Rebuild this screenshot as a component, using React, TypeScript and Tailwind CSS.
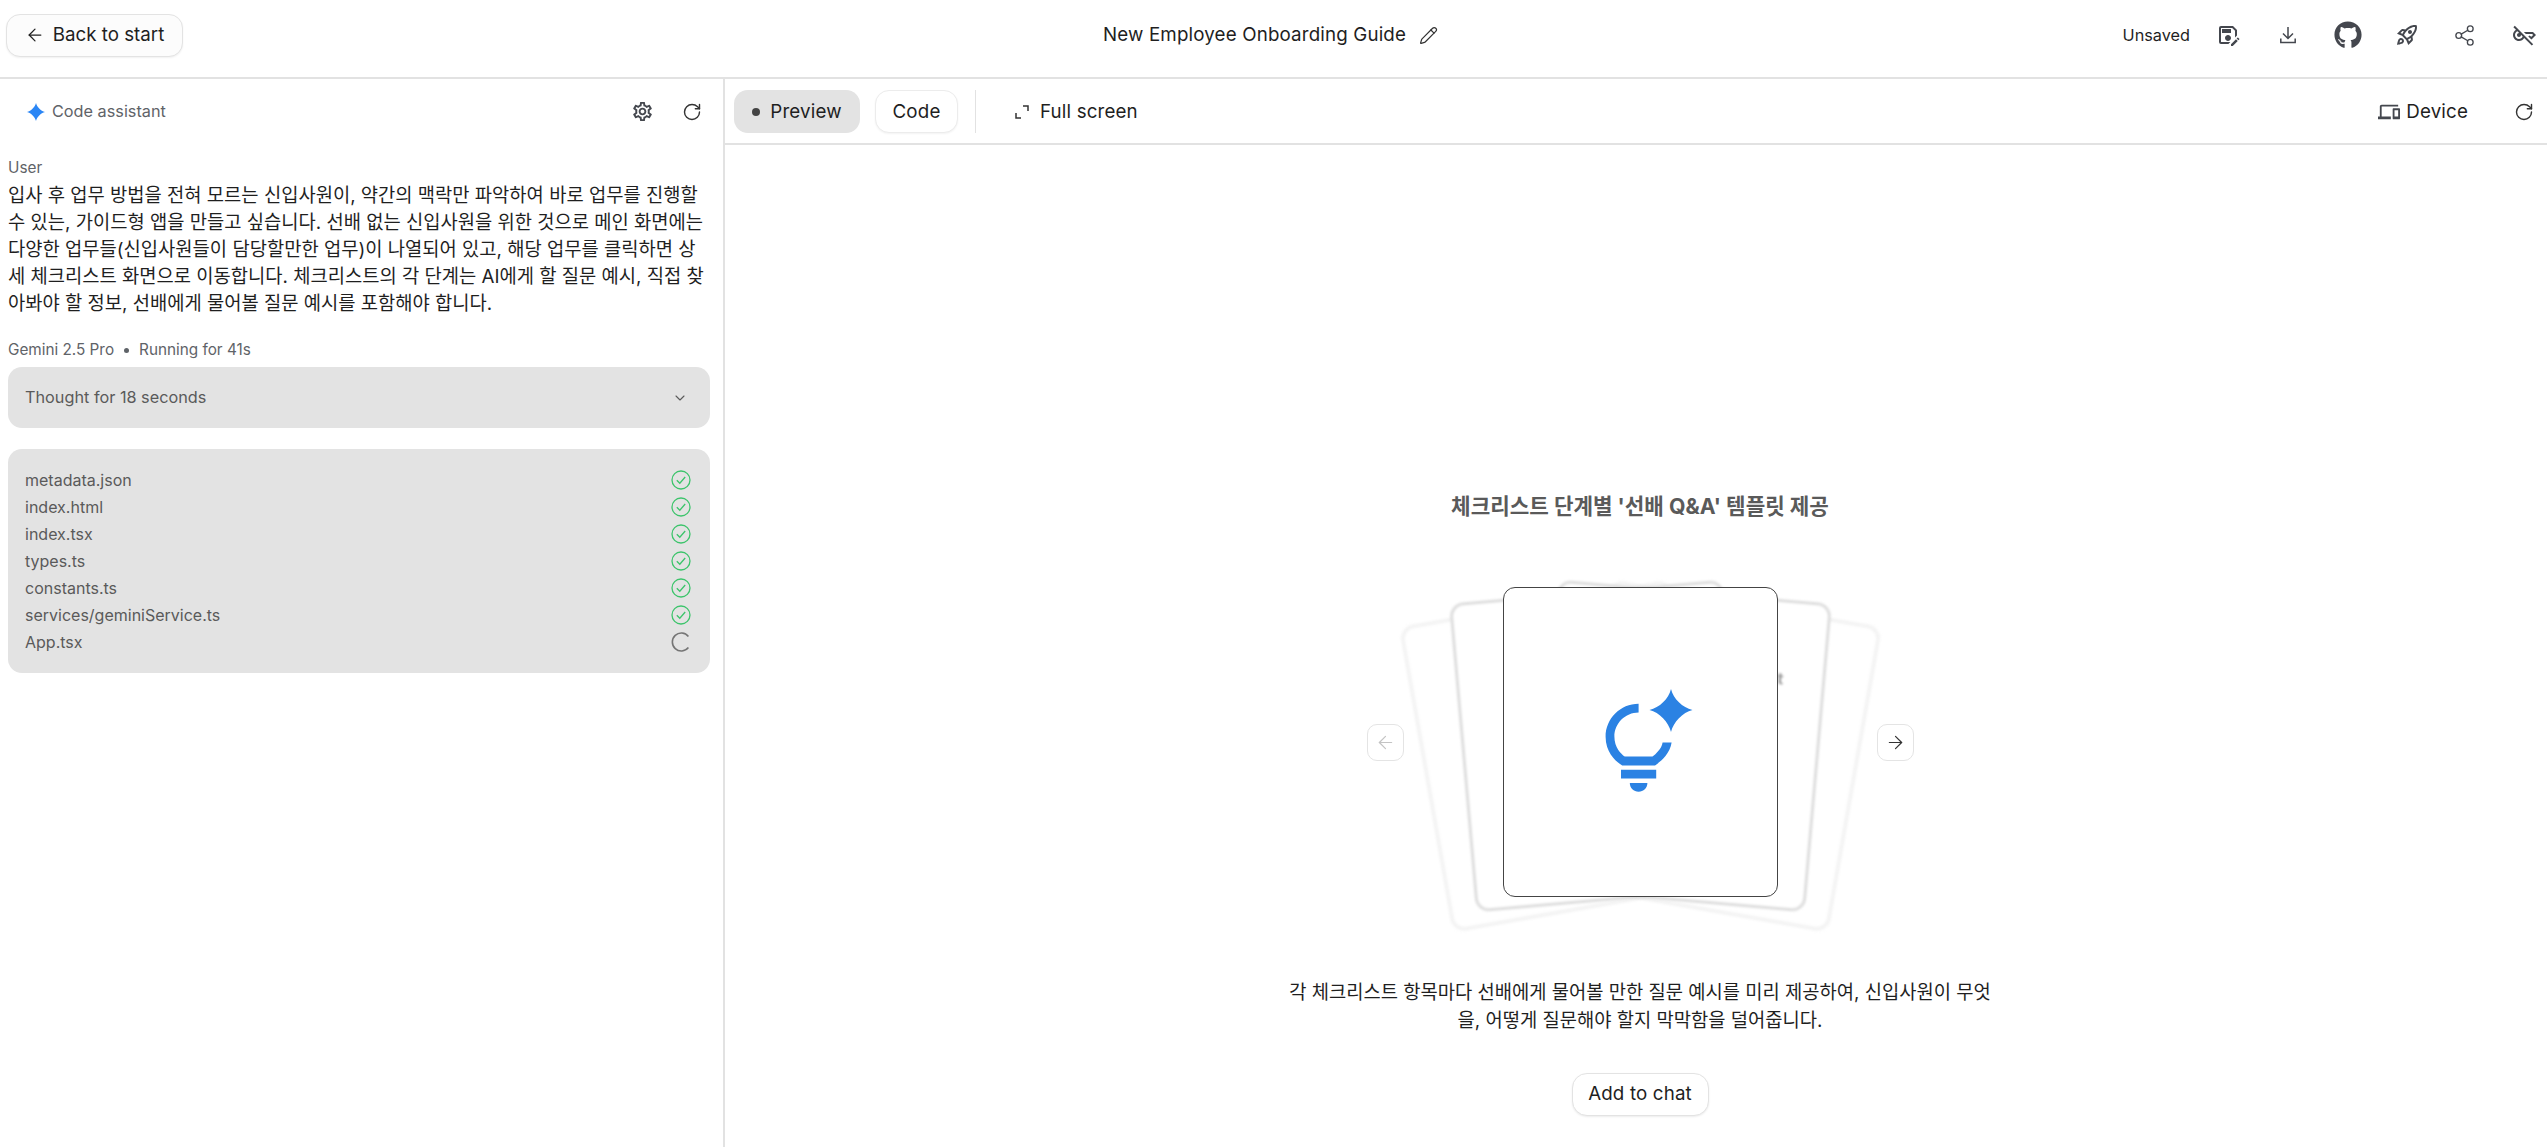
import { ArrowLeft, ChevronDown, Pencil, RotateCw, Share2 } from 'lucide-react'
import { FaGithub } from 'react-icons/fa'
import {
  MdOutlineDevices,
  MdOutlineKeyOff,
  MdOutlineRocketLaunch,
  MdOutlineSaveAs,
  MdOutlineSettings,
} from 'react-icons/md'

const files = ['metadata.json', 'index.html', 'index.tsx', 'types.ts', 'constants.ts', 'services/geminiService.ts']

function Sparkle({ className }: { className: string }) {
  return (
    <svg viewBox="0 0 44 44" className={className} fill="currentColor">
      <path d="M22 0C24.5 10 33.5 19 44 22 33.5 25 24.5 34 22 44 19.5 34 10.5 25 0 22 10.5 19 19.5 10 22 0z" />
    </svg>
  )
}

function CheckRing() {
  return (
    <svg viewBox="0 0 20 20" className="h-5 w-5 text-[#3cc46b]" fill="none" stroke="currentColor" strokeWidth="1.3">
      <circle cx="10" cy="10" r="9" />
      <path d="M5.8 10.2l3 3 5.4-6.2" />
    </svg>
  )
}

function Spinner() {
  return (
    <svg viewBox="0 0 20 20" className="h-5 w-5 text-[#757575]" fill="none" stroke="currentColor" strokeWidth="1.6">
      <path d="M17.4 4.4A9 9 0 1 0 17.4 15.6" />
    </svg>
  )
}

function FullScreenIcon() {
  return (
    <svg viewBox="0 0 14 14" className="h-[14px] w-[14px] text-[#333]" fill="none" stroke="currentColor" strokeWidth="1.5">
      <path d="M1 8v5h5M8 1h5v5" />
    </svg>
  )
}

function DownloadIcon() {
  return (
    <svg viewBox="0 0 24 24" className="h-6 w-6" fill="none" stroke="currentColor" strokeWidth="1.5">
      <path d="M12 4v11.5M7 10.5l5 5 5-5M4.8 15.5v4h14.4v-4" />
    </svg>
  )
}

function BackCard({ className, children }: { className: string; children?: React.ReactNode }) {
  return (
    <div className={`absolute h-[310px] w-[275px] rounded-[14px] bg-white ${className}`}>
      {children}
    </div>
  )
}

export default function App() {
  return (
    <div className="flex h-[1147px] w-full flex-col overflow-hidden bg-white font-['Inter','Noto_Sans_CJK_KR',sans-serif] text-[#1f1f1f]">
      <header className="relative flex h-[79px] shrink-0 items-center justify-between border-b-2 border-[#e2e2e2] pb-[7px] pl-[6px] pr-[11px]">
        <button className="flex h-[43px] w-[177px] items-center justify-center gap-[8px] rounded-[14px] border border-[#e3e3e3] bg-[#fcfcfc] text-[18.75px] shadow-[0_1px_2px_rgba(0,0,0,0.06)]">
          <ArrowLeft size={20} strokeWidth={1.5} />
          Back to start
        </button>
        <div className="absolute left-[1103px] top-[20px] flex items-center gap-[13px] text-[18.75px] leading-[30px] tracking-[0.15px]">
          New Employee Onboarding Guide
          <Pencil size={19} strokeWidth={1.5} className="text-[#333]" />
        </div>
        <div className="flex items-center text-[#44474e]">
          <span className="mr-[26px] text-[16.25px] text-[#1f1f1f]">Unsaved</span>
          <MdOutlineSaveAs size={24} className="mr-[36px]" />
          <DownloadIcon />
          <FaGithub size={28} className="ml-[34px] mr-[33px]" />
          <MdOutlineRocketLaunch size={24} className="mr-[34px]" />
          <Share2 size={23} strokeWidth={1.4} className="mr-[36px]" />
          <MdOutlineKeyOff size={24} />
        </div>
      </header>

      <div className="flex min-h-0 flex-1">
        <aside className="w-[725px] shrink-0 border-r-2 border-[#e2e2e2] pl-[8px] pr-[13px]">
          <div className="flex h-[65px] items-center justify-between pl-[19px] pr-[8px] text-[#44474e]">
            <div className="flex items-center gap-[7px] text-[16.25px] text-[#5f6368]">
              <Sparkle className="h-[18px] w-[18px] text-[#2b86f5]" />
              Code assistant
            </div>
            <div className="flex items-center gap-[28px]">
              <MdOutlineSettings size={23} />
              <RotateCw size={20} strokeWidth={1.7} className="text-[#333]" />
            </div>
          </div>

          <p className="mt-[13px] text-[15.3px] leading-[22px] text-[#5f6368]">User</p>
          <p className="mt-[3px] text-[18.75px] leading-[27px] text-[#1f1f1f]">
            입사 후 업무 방법을 전혀 모르는 신입사원이, 약간의 맥락만 파악하여 바로 업무를 진행할 수 있는, 가이드형 앱을 만들고 싶습니다. 선배 없는 신입사원을 위한 것으로 메인 화면에는 다양한 업무들(신입사원들이 담당할만한 업무)이 나열되어 있고, 해당 업무를 클릭하면 상세 체크리스트 화면으로 이동합니다. 체크리스트의 각 단계는 AI에게 할 질문 예시, 직접 찾아봐야 할 정보, 선배에게 물어볼 질문 예시를 포함해야 합니다.
          </p>

          <div className="mt-[22px] flex items-center text-[15.3px] leading-[22px] text-[#5f6368]">
            Gemini 2.5 Pro
            <span className="mx-[10px] h-[5px] w-[5px] rounded-full bg-[#5f6368]" />
            Running for 41s
          </div>
          <div className="mt-[6px] flex h-[61px] items-center justify-between rounded-[14px] bg-[#e3e3e3] pl-[17px] pr-[22px] text-[16.25px] text-[#5a5a5a]">
            Thought for 18 seconds
            <ChevronDown size={16} strokeWidth={1.6} />
          </div>

          <div className="mt-[21px] rounded-[14px] bg-[#e3e3e3] pb-[18px] pl-[17px] pr-[19px] pt-[17px] text-[16px] text-[#5a5a5a]">
            {files.map(name => (
              <div key={name} className="flex h-[27px] items-center justify-between">
                {name}
                <CheckRing />
              </div>
            ))}
            <div className="flex h-[27px] items-center justify-between">
              App.tsx
              <Spinner />
            </div>
          </div>
        </aside>

        <main className="flex min-w-0 flex-1 flex-col">
          <div className="flex h-[66px] shrink-0 items-center border-b-2 border-[#e2e2e2] pl-[9px] pr-[13px] text-[18.75px] tracking-[0.15px]">
            <button className="flex h-[43px] w-[126px] items-center justify-center gap-[10px] rounded-[14px] bg-[#e3e3e3] pt-[2px]">
              <span className="h-[8px] w-[8px] rounded-full bg-[#444]" />
              Preview
            </button>
            <button className="ml-[15px] flex h-[43px] w-[83px] items-center justify-center rounded-[14px] border border-[#ececec] bg-white pt-[2px] shadow-[0_1px_2px_rgba(0,0,0,0.05)]">
              Code
            </button>
            <div className="ml-[17px] h-[43px] w-px bg-[#e2e2e2]" />
            <button className="ml-[39px] flex items-center gap-[11px] pt-[2px]">
              <FullScreenIcon />
              Full screen
            </button>
            <div className="ml-auto flex items-center pt-[2px] text-[#44474e]">
              <MdOutlineDevices size={22} className="mr-[6px]" />
              <span className="mr-[46px] text-[#1f1f1f]">Device</span>
              <RotateCw size={20} strokeWidth={1.7} className="text-[#333]" />
            </div>
          </div>

          <div className="flex flex-1 flex-col items-center pl-[8px]">
            <h2 className="mt-[347px] text-[21.25px] font-bold leading-[28px] text-[#5a5a5a]">
              체크리스트 단계별 '선배 Q&amp;A' 템플릿 제공
            </h2>

            <div className="relative mt-[67px] flex h-[310px] w-[547px] items-center justify-between">
              <button className="flex h-[37px] w-[37px] items-center justify-center rounded-[10px] border border-[#e4e4e4] bg-white text-[#c4c4c4]">
                <ArrowLeft size={21} strokeWidth={1.4} />
              </button>
              <BackCard className="left-[57px] top-[14px] -rotate-10 border-[3px] border-[#f0f0f0] blur-[1.5px]" />
              <BackCard className="left-[215px] top-[14px] rotate-10 border-[3px] border-[#f0f0f0] blur-[1.5px]" />
              <BackCard className="left-[95px] top-[4px] -rotate-5 border-[3px] border-[#dedede] blur-[1px]" />
              <BackCard className="left-[177px] top-[4px] rotate-5 border-[3px] border-[#dedede] blur-[1px]">
                <span className="absolute right-[39px] top-[64px] text-[16px] font-bold text-[#9a9a9a]">Default</span>
              </BackCard>
              <div className="absolute left-[136px] top-0 flex h-[310px] w-[275px] items-center justify-center rounded-[12px] border border-[#444] bg-white pl-[18px]">
                <svg viewBox="0 0 88 106" className="h-[106px] w-[88px] text-[#2b82e3]" fill="currentColor">
                  <g transform="translate(-6 6) scale(4.4)">
                    <path d="M7 20h4c0 1.1-.9 2-2 2s-2-.9-2-2zm-2-1h8v-2H5v2zM16.5 10.8c-.4 2.7-2.6 4.4-3.77 5.2H5.27C4.16 15.36 1.5 13.32 1.5 9.5 1.5 5.36 4.86 2 9 2v2C5.97 4 3.5 6.47 3.5 9.5c0 2.47 1.49 3.89 2.35 4.5h6.3c.8-.6 2.1-1.8 2.3-3.2z" />
                  </g>
                  <path d="M66 0C68.5 10 77.5 18.5 87.5 21 77.5 23.5 68.5 33 66 43 63.5 33 54.5 23.5 44.5 21 54.5 18.5 63.5 10 66 0z" />
                </svg>
              </div>
              <button className="relative flex h-[37px] w-[37px] items-center justify-center rounded-[10px] border border-[#e4e4e4] bg-white text-[#333]">
                <ArrowLeft size={21} strokeWidth={1.4} className="rotate-180" />
              </button>
            </div>

            <p className="mt-[82px] w-[712px] text-center text-[18.75px] leading-[28px] text-[#1f1f1f]">
              각 체크리스트 항목마다 선배에게 물어볼 만한 질문 예시를 미리 제공하여, 신입사원이 무엇을, 어떻게 질문해야 할지 막막함을 덜어줍니다.
            </p>
            <button className="mt-[38px] flex h-[43px] w-[137px] items-center justify-center rounded-[15px] border border-[#e3e3e3] bg-white text-[18.75px] tracking-[0.15px] shadow-[0_1px_2px_rgba(0,0,0,0.08)]">
              Add to chat
            </button>
          </div>
        </main>
      </div>
    </div>
  )
}
